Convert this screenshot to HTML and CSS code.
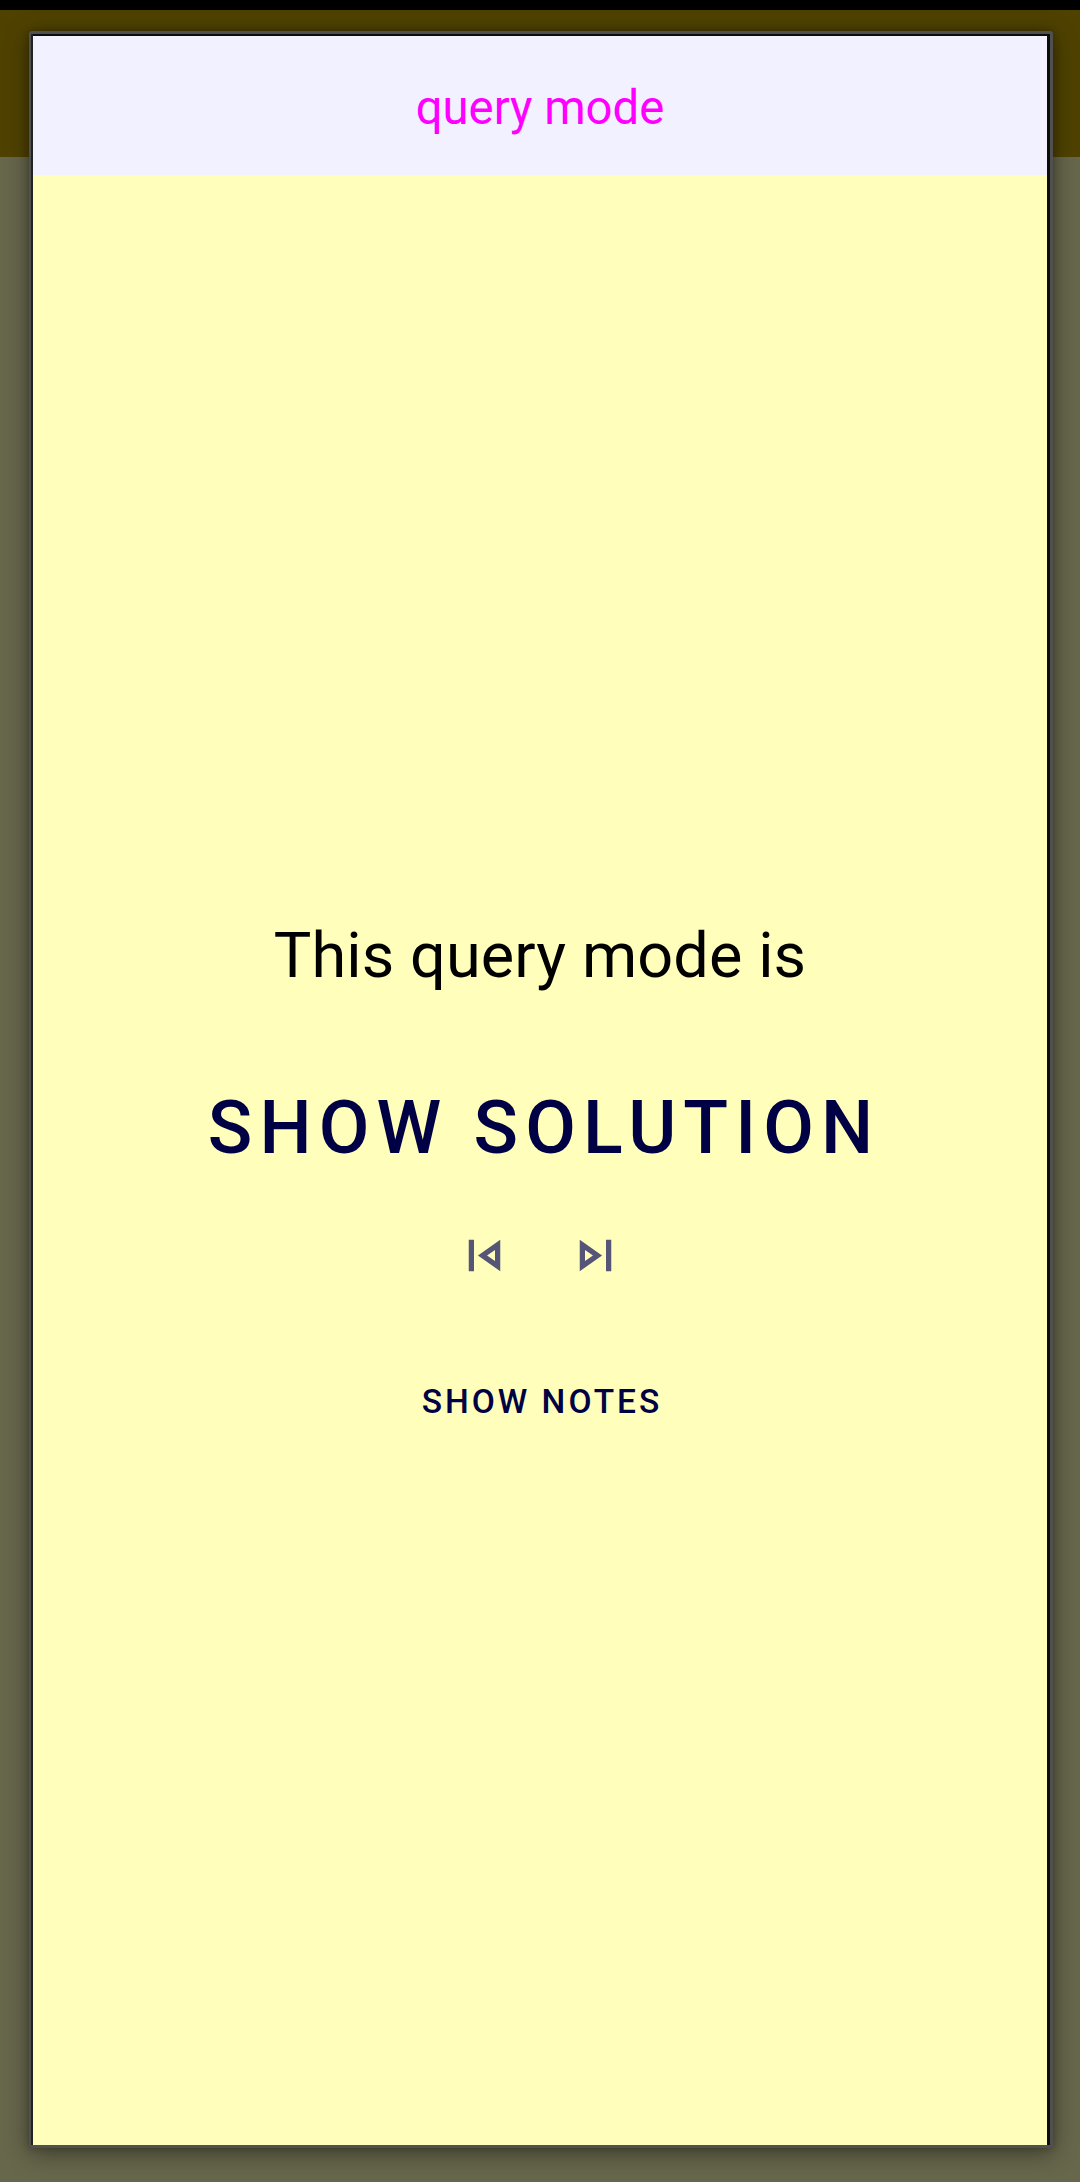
FILE: index.html
```html
<!DOCTYPE html>
<html lang="en">
<head>
<meta charset="utf-8">
<title>query mode</title>
<link rel="stylesheet" href="styles.css">
</head>
<body>
<div class="screen">
  <main class="dialog">
    <header class="title"><span>query mode</span></header>
    <div class="content">
      <p class="question">This query mode is</p>
      <button class="solution">SHOW SOLUTION</button>
      <nav class="controls">
        <svg class="icon" viewBox="0 0 24 24"><path fill-rule="evenodd" d="M6 6h2v12H6zM18 6v12l-8.5-6zM16 9.86 12.97 12 16 14.14z"/></svg>
        <svg class="icon" viewBox="0 0 24 24"><path fill-rule="evenodd" d="M16 6h2v12h-2zM6 6v12l8.5-6zM8 9.86 11.03 12 8 14.14z"/></svg>
      </nav>
      <button class="notes">SHOW NOTES</button>
    </div>
  </main>
</div>
</body>
</html>
```
FILE: styles.css
```css
* { box-sizing: border-box; }
body { margin: 0; font-family: Roboto, sans-serif; }
.screen {
  width: 1080px;
  height: 2182px;
  padding: 31px 27px 34px 29px;
  background: linear-gradient(#000 0 10px, #4f4200 10px 157px, #67674c 157px);
  overflow: hidden;
}
.dialog {
  height: 2117px;
  border: solid #505050;
  border-width: 3px 3px 3px 2px;
  border-radius: 3px;
  background: #0c0c08;
  padding: 2px 3px 0 2px;
  box-shadow: inset 2px 0 #222, 0 5px 24px rgba(0, 0, 0, .42), 0 0 7px rgba(0, 0, 0, .25);
}
.title {
  height: 139px;
  display: flex;
  align-items: center;
  justify-content: center;
  background: #f2f1ff;
  color: #f0f;
  font-size: 47.25px;
  line-height: 56px;
  padding-top: 5px;
}
.content {
  height: 1970px;
  display: flex;
  flex-direction: column;
  align-items: center;
  background: #ffffbb;
}
.question {
  margin: 744px 0 0;
  font-size: 63px;
  line-height: 74px;
  letter-spacing: .1px;
  color: #000;
}
button {
  border: 0;
  padding: 0;
  background: none;
  color: #000044;
  font-family: inherit;
  font-weight: 500;
  white-space: nowrap;
}
.solution {
  margin-top: 92px;
  padding-left: 8px;
  font-size: 73.5px;
  line-height: 86px;
  letter-spacing: 7.1px;
}
.controls {
  display: flex;
  gap: 48px;
  margin-top: 53px;
}
.icon { display: block; width: 63px; height: 63px; fill: #555577; }
.notes {
  margin-top: 95px;
  padding-left: 4px;
  font-size: 33.5px;
  line-height: 40px;
  letter-spacing: 3px;
}
```
